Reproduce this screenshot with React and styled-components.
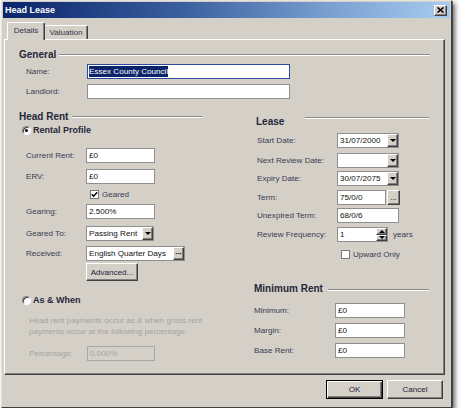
import React from "react";
import styled, { createGlobalStyle, css } from "styled-components";

const GlobalStyle = createGlobalStyle`
  html, body { margin: 0; padding: 0; background: #ffffff; }
  body {
    font-family: "Liberation Sans", Arial, sans-serif;
    font-size: 8.1px;
    color: #33334a;
  }
  * { box-sizing: border-box; }
`;

const raised = css`
  border: 1px solid;
  border-color: #ffffff #404040 #404040 #ffffff;
  box-shadow: inset -1px -1px 0 #808080;
  background: #d4d0c8;
`;

const Window = styled.div`
  width: 451px;
  height: 408px;
  margin-left: 1px;
  background: #d4d0c8;
  border: 1px solid;
  border-color: #e6e4de #404040 #404040 #e6e4de;
  box-shadow: 3px 3px 5px rgba(0, 0, 0, 0.6), 1px 1px 0 #808080;
  padding: 1px;
  display: flex;
  flex-direction: column;
`;

const TitleBar = styled.div`
  height: 16px;
  flex: none;
  display: flex;
  align-items: center;
  justify-content: space-between;
  padding: 0 2px 0 2px;
  background: linear-gradient(to right, #0a246a 0%, #3a5f9f 40%, #7ea3d3 75%, #a8cbf0 100%);
`;

const Title = styled.span`
  color: #ffffff;
  font-weight: bold;
  font-size: 9px;
`;

const CloseButton = styled.div`
  ${raised};
  width: 13px;
  height: 11px;
  display: flex;
  align-items: center;
  justify-content: center;
  margin-right: 1px;
`;

const Body = styled.div`
  flex: 1;
  padding: 4px 5px 0 1px;
  display: flex;
  flex-direction: column;
`;

const TabStrip = styled.div`
  height: 17px;
  display: flex;
  align-items: flex-end;
  padding-left: 3px;
  position: relative;
  z-index: 1;
`;

const Tab = styled.div`
  height: ${(p) => (p.$active ? 18 : 14)}px;
  width: ${(p) => p.$w}px;
  margin-bottom: ${(p) => (p.$active ? -1 : 0)}px;
  background: #d4d0c8;
  border-top: 1px solid #ffffff;
  border-left: ${(p) => (p.$active ? "1px solid #ffffff" : "none")};
  border-right: 1px solid #404040;
  box-shadow: inset -1px 0 0 #808080;
  border-radius: 2px 2px 0 0;
  display: flex;
  align-items: center;
  justify-content: center;
  padding-bottom: ${(p) => (p.$active ? 2 : 0)}px;
  color: #33334a;
`;

const TabPanel = styled.div`
  height: 336px;
  flex: none;
  border: 1px solid;
  border-color: #ffffff #404040 #404040 #ffffff;
  box-shadow: inset -1px -1px 0 #808080;
  padding: 8px 14px 0 14px;
`;

const Heading = styled.div`
  display: flex;
  align-items: center;
  height: 12px;
  margin-top: ${(p) => p.$mt || 0}px;
  padding-left: ${(p) => p.$indent || 0}px;
`;

const HeadingText = styled.span`
  font-size: 10px;
  font-weight: bold;
  color: #26263a;
  white-space: nowrap;
`;

const HeadingLine = styled.span`
  flex: 1;
  height: 2px;
  margin-left: ${(p) => p.$gap || 4}px;
  border-top: 1px solid #8c8a86;
  border-bottom: 1px solid #ffffff;
  position: relative;
  top: ${(p) => p.$dy || 1}px;
`;

const Row = styled.div`
  display: flex;
  align-items: center;
  height: 15px;
  margin-top: ${(p) => p.$mt || 0}px;
  padding-left: ${(p) => p.$indent || 0}px;
`;

const Label = styled.span`
  width: ${(p) => p.$w}px;
  flex: none;
  white-space: nowrap;
  color: ${(p) => (p.$disabled ? "#a6a39d" : "#3a3a52")};
`;

const TextBox = styled.div`
  width: ${(p) => p.$w}px;
  height: 15px;
  flex: none;
  border: 1px solid ${(p) => (p.$focused ? "#2a4c98" : p.$disabled ? "#a9a7a2" : "#8f8f8f")};
  background: ${(p) => (p.$disabled ? "#d4d0c8" : "#ffffff")};
  color: ${(p) => (p.$disabled ? "#a6a39d" : "#111111")};
  display: flex;
  align-items: center;
  padding-left: ${(p) => (p.$focused ? 1 : 2)}px;
  white-space: nowrap;
  overflow: hidden;
`;

const Selected = styled.span`
  background: #0a246a;
  color: #ffffff;
  line-height: 11px;
`;

const BoxValue = styled.span`
  flex: 1;
  overflow: hidden;
`;

const DropButton = styled.div`
  ${raised};
  width: 11px;
  height: 13px;
  flex: none;
  display: flex;
  align-items: center;
  justify-content: center;
`;

const Arrow = styled.span`
  width: 0;
  height: 0;
  border-left: 3px solid transparent;
  border-right: 3px solid transparent;
  border-top: 3px solid #000000;
  border-bottom: none;
  ${(p) =>
    p.$up &&
    css`
      border-top: none;
      border-bottom: 3px solid #000000;
    `}
`;

const Dots = styled.span`
  font-weight: bold;
  font-size: 8px;
  line-height: 6px;
  letter-spacing: -0.5px;
  color: #000;
`;

const EllipsisButton = styled.div`
  ${raised};
  width: 13px;
  height: 15px;
  flex: none;
  display: flex;
  align-items: flex-end;
  justify-content: center;
  padding-bottom: 2px;
  margin-left: 1px;
  color: #000;
  font-size: 8px;
`;

const SpinButtons = styled.div`
  width: 11px;
  height: 13px;
  flex: none;
  display: flex;
  flex-direction: column;
`;

const SpinHalf = styled.div`
  ${raised};
  flex: 1;
  display: flex;
  align-items: center;
  justify-content: center;
`;

const Unit = styled.span`
  margin-left: 5px;
  color: #3a3a52;
`;

const OptionRow = styled.div`
  display: flex;
  align-items: center;
  height: 12px;
  margin-top: ${(p) => p.$mt || 0}px;
  padding-left: ${(p) => p.$indent || 0}px;
`;

const Radio = styled.span`
  width: 9px;
  height: 9px;
  border-radius: 50%;
  background: #ffffff;
  border: 1px solid;
  border-color: #808080 #ffffff #ffffff #808080;
  box-shadow: inset 1px 1px 0 #404040;
  display: flex;
  align-items: center;
  justify-content: center;
  flex: none;
  &::after {
    content: "";
    width: 3px;
    height: 3px;
    border-radius: 50%;
    background: ${(p) => (p.$checked ? "#000000" : "transparent")};
  }
`;

const OptionLabel = styled.span`
  margin-left: 2px;
  font-size: 9px;
  font-weight: bold;
  color: #26263a;
`;

const CheckRow = styled.div`
  display: flex;
  align-items: center;
  height: 13px;
  margin-top: ${(p) => p.$mt || 0}px;
  padding-left: ${(p) => p.$indent || 0}px;
`;

const CheckBox = styled.span`
  width: 9px;
  height: 9px;
  flex: none;
  background: #ffffff;
  border: 1px solid #7a7a7a;
  display: flex;
  align-items: center;
  justify-content: center;
`;

const CheckLabel = styled.span`
  margin-left: 3px;
  color: #3a3a52;
`;

const PushButton = styled.div`
  width: ${(p) => p.$w}px;
  height: ${(p) => p.$h || 19}px;
  flex: none;
  display: flex;
  align-items: center;
  justify-content: center;
  color: #22223a;
  margin-top: ${(p) => p.$mt || 0}px;
  margin-left: ${(p) => p.$ml || 0}px;
  background: #d4d0c8;
  ${(p) =>
    p.$default
      ? css`
          border: 1px solid #000000;
          box-shadow: inset 1px 1px 0 #ffffff, inset -1px -1px 0 #404040, inset -2px -2px 0 #808080;
        `
      : css`
          border: 1px solid;
          border-color: #ffffff #404040 #404040 #ffffff;
          box-shadow: inset -1px -1px 0 #808080;
        `}
`;

const Note = styled.p`
  margin: ${(p) => p.$mt || 0}px 0 0 0;
  padding-left: ${(p) => p.$indent || 0}px;
  line-height: 11px;
  white-space: nowrap;
  color: #a6a39d;
`;

const Columns = styled.div`
  display: flex;
  margin-top: 11px;
`;

const Column = styled.div`
  width: ${(p) => p.$w}px;
  margin-left: ${(p) => p.$ml || 0}px;
  display: flex;
  flex-direction: column;
  flex: none;
`;

const Footer = styled.div`
  display: flex;
  justify-content: flex-end;
  gap: 4px;
  margin-top: 5px;
  padding-right: 2px;
`;

const Combo = ({ w, value }) => (
  <TextBox $w={w}>
    <BoxValue>{value}</BoxValue>
    <DropButton>
      <Arrow />
    </DropButton>
  </TextBox>
);

const Check = ({ checked }) => (
  <CheckBox>
    {checked && (
      <svg width="7" height="7" viewBox="0 0 7 7">
        <path d="M0.8 3.2 L2.6 5.2 L6.2 1.2" fill="none" stroke="#000" strokeWidth="1.5" />
      </svg>
    )}
  </CheckBox>
);

export default function App() {
  return (
    <>
      <GlobalStyle />
      <Window>
        <TitleBar>
          <Title>Head Lease</Title>
          <CloseButton>
            <svg width="7" height="6" viewBox="0 0 7 6">
              <path d="M0.5 0.5 L6.5 5.5 M6.5 0.5 L0.5 5.5" stroke="#000" strokeWidth="1.6" />
            </svg>
          </CloseButton>
        </TitleBar>
        <Body>
          <TabStrip>
            <Tab $active $w={38}>Details</Tab>
            <Tab $w={43}>Valuation</Tab>
          </TabStrip>
          <TabPanel>
            <Heading>
              <HeadingText>General</HeadingText>
              <HeadingLine $gap={3} />
            </Heading>
            <Row $mt={4} $indent={7}>
              <Label $w={61}>Name:</Label>
              <TextBox $w={203} $focused>
                <Selected>Essex County Council</Selected>
              </TextBox>
            </Row>
            <Row $mt={5} $indent={7}>
              <Label $w={61}>Landlord:</Label>
              <TextBox $w={203} />
            </Row>

            <Columns>
              <Column $w={183}>
                <Heading>
                  <HeadingText>Head Rent</HeadingText>
                  <HeadingLine $gap={4} />
                </Heading>
                <OptionRow $mt={2} $indent={3}>
                  <Radio $checked />
                  <OptionLabel>Rental Profile</OptionLabel>
                </OptionRow>
                <Row $mt={12} $indent={7}>
                  <Label $w={60}>Current Rent:</Label>
                  <TextBox $w={69}>£0</TextBox>
                </Row>
                <Row $mt={6} $indent={7}>
                  <Label $w={60}>ERV:</Label>
                  <TextBox $w={69}>£0</TextBox>
                </Row>
                <CheckRow $mt={4} $indent={71}>
                  <Check checked />
                  <CheckLabel>Geared</CheckLabel>
                </CheckRow>
                <Row $mt={3} $indent={7}>
                  <Label $w={60}>Gearing:</Label>
                  <TextBox $w={69}>2.500%</TextBox>
                </Row>
                <Row $mt={7} $indent={7}>
                  <Label $w={60}>Geared To:</Label>
                  <Combo w={68} value="Passing Rent" />
                </Row>
                <Row $mt={5} $indent={7}>
                  <Label $w={60}>Received:</Label>
                  <TextBox $w={99}>
                    <BoxValue>English Quarter Days</BoxValue>
                    <DropButton>
                      <Dots>···</Dots>
                    </DropButton>
                  </TextBox>
                </Row>
                <PushButton $w={52} $h={18} $mt={2} $ml={67}>
                  Advanced...
                </PushButton>
                <OptionRow $mt={13} $indent={3}>
                  <Radio />
                  <OptionLabel>As &amp; When</OptionLabel>
                </OptionRow>
                <Note $mt={9} $indent={10}>
                  Head rent payments occur as &amp; when gross rent
                  <br />
                  payments occur at the following percentage.
                </Note>
                <Row $mt={9} $indent={10}>
                  <Label $w={58} $disabled>
                    Percentage:
                  </Label>
                  <TextBox $w={68} $disabled>
                    0.000%
                  </TextBox>
                </Row>
              </Column>

              <Column $w={175} $ml={52}>
                <Heading $mt={5} $indent={2}>
                  <HeadingText>Lease</HeadingText>
                  <HeadingLine $gap={21} $dy={-3} />
                </Heading>
                <Row $mt={6} $indent={3}>
                  <Label $w={80}>Start Date:</Label>
                  <Combo w={62} value="31/07/2000" />
                </Row>
                <Row $mt={5} $indent={3}>
                  <Label $w={80}>Next Review Date:</Label>
                  <Combo w={62} value="" />
                </Row>
                <Row $mt={3} $indent={3}>
                  <Label $w={80}>Expiry Date:</Label>
                  <Combo w={62} value="30/07/2075" />
                </Row>
                <Row $mt={4} $indent={3}>
                  <Label $w={80}>Term:</Label>
                  <TextBox $w={49}>75/0/0</TextBox>
                  <EllipsisButton>...</EllipsisButton>
                </Row>
                <Row $mt={3} $indent={3}>
                  <Label $w={80}>Unexpired Term:</Label>
                  <TextBox $w={62}>68/0/6</TextBox>
                </Row>
                <Row $mt={4} $indent={3}>
                  <Label $w={80}>Review Frequency:</Label>
                  <TextBox $w={51}>
                    <BoxValue>1</BoxValue>
                    <SpinButtons>
                      <SpinHalf>
                        <Arrow $up />
                      </SpinHalf>
                      <SpinHalf>
                        <Arrow />
                      </SpinHalf>
                    </SpinButtons>
                  </TextBox>
                  <Unit>years</Unit>
                </Row>
                <CheckRow $mt={6} $indent={87}>
                  <Check />
                  <CheckLabel>Upward Only</CheckLabel>
                </CheckRow>
                <Heading $mt={21}>
                  <HeadingText>Minimum Rent</HeadingText>
                  <HeadingLine $gap={5} $dy={2} />
                </Heading>
                <Row $mt={9}>
                  <Label $w={81}>Minimum:</Label>
                  <TextBox $w={70}>£0</TextBox>
                </Row>
                <Row $mt={5}>
                  <Label $w={81}>Margin:</Label>
                  <TextBox $w={70}>£0</TextBox>
                </Row>
                <Row $mt={5}>
                  <Label $w={81}>Base Rent:</Label>
                  <TextBox $w={70}>£0</TextBox>
                </Row>
              </Column>
            </Columns>
          </TabPanel>
          <Footer>
            <PushButton $w={57} $default>
              OK
            </PushButton>
            <PushButton $w={56}>Cancel</PushButton>
          </Footer>
        </Body>
      </Window>
    </>
  );
}
